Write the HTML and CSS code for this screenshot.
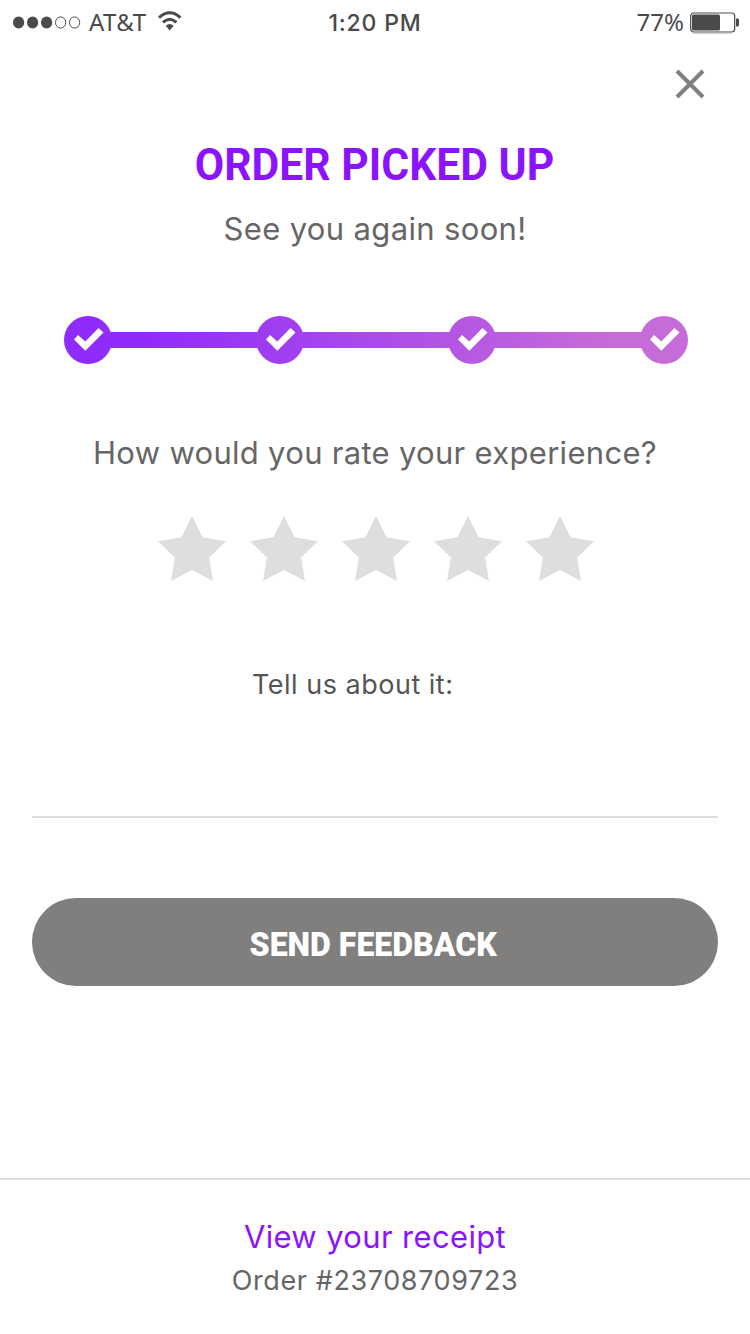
FILE: index.html
```html
<!DOCTYPE html>
<html lang="en">
<head>
<meta charset="utf-8">
<title>Order picked up</title>
<link rel="stylesheet" href="styles.css">
</head>
<body>
<main class="screen">
  <header class="status">
    <div class="status-left">
      <svg class="signal" width="68" height="14" viewBox="0 0 68 14">
        <g fill="#4a4a4a"><ellipse cx="5.6" cy="6.5" rx="5.6" ry="6.1"/><ellipse cx="19.6" cy="6.5" rx="5.6" ry="6.1"/><ellipse cx="33.6" cy="6.5" rx="5.6" ry="6.1"/></g>
        <g fill="none" stroke="#4a4a4a"><ellipse cx="47.6" cy="6.5" rx="5.1" ry="5.6"/><ellipse cx="61.6" cy="6.5" rx="5.1" ry="5.6"/></g>
      </svg>
      <span class="carrier">AT&amp;T</span>
      <svg class="wifi" width="24" height="20" viewBox="0 0 24 20">
        <g fill="none" stroke="#4a4a4a" stroke-width="3"><path d="M1 6.7Q11.7-3.1 22.4 6.7"/><path d="M5 11.4Q11.7 5.2 18.4 11.4"/></g>
        <path fill="#4a4a4a" d="M7.8 14.8Q11.7 11.2 15.6 14.8L11.7 19.4Z"/>
      </svg>
    </div>
    <div class="clock">1:20 PM</div>
    <div class="status-right">
      <span class="percent">77%</span>
      <svg class="battery" width="50" height="22" viewBox="0 0 50 22">
        <rect x="0.7" y="1" width="44" height="19" rx="3" fill="none" stroke="#4a4a4a" stroke-width="1.2"/>
        <path d="M3 20.8H42" stroke="#aaa" stroke-width="1.2"/>
        <rect x="2" y="2.5" width="28" height="16" rx="1.5" fill="#4a4a4a"/>
        <path d="M46 6.5h1.5q1.5 0 1.5 1.5v5q0 1.5-1.5 1.5H46z" fill="#4a4a4a"/>
      </svg>
    </div>
  </header>

  <div class="close-row">
    <svg width="30" height="30" viewBox="0 0 30 30"><path d="M2 2L28 28M28 2L2 28" stroke="#807f7d" stroke-width="4"/></svg>
  </div>

  <h1 class="title">ORDER PICKED UP</h1>
  <p class="subtitle">See you again soon!</p>

  <svg class="progress" width="624" height="48" viewBox="0 0 624 48">
    <defs>
      <linearGradient id="track" gradientUnits="userSpaceOnUse" x1="80" y1="0" x2="540" y2="48">
        <stop offset="0" stop-color="#8f2bfb"/><stop offset="1" stop-color="#c76bd8"/>
      </linearGradient>
      <path id="check" d="M-14 -.5L-10 -5L-2.7 1.5L10.5 -12L15.5 -7.5L-2.7 10.8Z"/>
    </defs>
    <g fill="url(#track)">
      <rect x="24" y="16" width="576" height="16"/>
      <circle cx="24" cy="24" r="24"/><circle cx="216" cy="24" r="24"/><circle cx="408" cy="24" r="24"/><circle cx="600" cy="24" r="24"/>
    </g>
    <g fill="#fff"><use href="#check" x="24" y="24"/><use href="#check" x="216" y="24"/><use href="#check" x="408" y="24"/><use href="#check" x="600" y="24"/></g>
  </svg>

  <p class="question">How would you rate your experience?</p>

  <svg class="stars" width="436" height="66" viewBox="0 0 436 66">
    <defs><path id="star" d="M34 0L44.5 21.3L68 25.2L51 41.5L55 65L34 54L13 65L17 41.5L0 25.2L23.5 21.3Z"/></defs>
    <g fill="#dedede"><use href="#star"/><use href="#star" x="92"/><use href="#star" x="184"/><use href="#star" x="276"/><use href="#star" x="368"/></g>
  </svg>

  <div class="comment">Tell us about it:</div>

  <button class="send"><span class="send-label">SEND FEEDBACK</span></button>

  <footer class="footer">
    <a class="receipt">View your receipt</a>
    <div class="order">Order #23708709723</div>
  </footer>
</main>
</body>
</html>
```
FILE: styles.css
```css
* { box-sizing: border-box; }
body { margin: 0; background: #fff; font-family: Inter, "Liberation Sans", sans-serif; color: #666; }
.screen { width: 750px; height: 1334px; display: flex; flex-direction: column; align-items: center; overflow: hidden; white-space: nowrap; }
svg { display: block; flex: none; }

.status { width: 750px; height: 45px; padding: 0 10px 0 13px; display: grid; grid-template-columns: 1fr auto 1fr; align-items: center; font-size: 24px; line-height: 43px; color: #4a4a4a; }
.status-left { display: flex; align-items: center; }
.carrier { margin: -2px 0 0 8px; font-family: "Noto Sans", sans-serif; letter-spacing: 0.4px; }
.wifi { margin: -3px 0 0 11px; }
.clock { padding: 2px 3px 0 0; font-weight: 500; font-size: 23px; letter-spacing: 0.8px; }
.status-right { display: flex; align-items: center; justify-content: flex-end; }
.percent { margin: -2px 6px 0 0; font-family: "Noto Sans", sans-serif; }

.close-row { width: 750px; height: 89px; padding: 24px 45px 0 0; display: flex; justify-content: flex-end; align-items: flex-start; }
.title { margin: 0; height: 62px; font: 700 45px/62px Roboto, sans-serif; color: #8c14fc; transform: scaleX(0.948); }
.subtitle { margin: 0; height: 66px; line-height: 65px; font-size: 31px; letter-spacing: 0.35px; }
.progress { margin: 54px 0 0 2px; }
.question { height: 66px; margin: 56px 0 0; line-height: 65px; font-size: 31px; letter-spacing: 0.3px; }
.stars { margin: 30px 0 0 2px; }
.comment { width: 686px; height: 166px; margin-top: 70px; padding-left: 220px; border-bottom: 2px solid #dedede; font-size: 27px; line-height: 66px; color: #555; letter-spacing: 0.5px; }
.send { width: 686px; height: 88px; margin-top: 80px; padding: 6px 3px 0 0; border: 0; border-radius: 44px; background: #807f7d; color: #fff; font: 900 33px/82px Roboto, sans-serif; }
.send-label { display: inline-block; transform: scaleX(0.972); }
.footer { width: 750px; margin-top: 192px; padding-top: 37px; border-top: 2px solid #dedede; text-align: center; }
.receipt { display: block; font-size: 31px; line-height: 40px; color: #8c14fc; letter-spacing: 0.35px; }
.order { font-size: 27px; line-height: 48px; letter-spacing: 0.6px; }
```
